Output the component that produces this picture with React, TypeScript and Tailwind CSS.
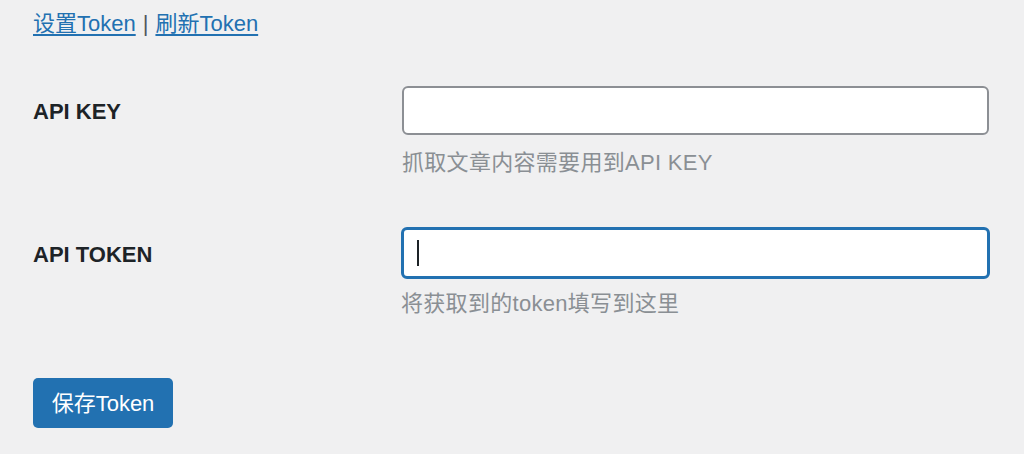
export default function App() {
  return (
    <div
      className="w-[1024px] h-[454px] bg-[#f0f0f1] text-[#1d2327] overflow-hidden"
      style={{ fontFamily: '"Liberation Sans", "Noto Sans CJK SC", sans-serif' }}
    >
      <div className="pl-[33px] pt-[9px]">
        {/* links */}
        <p className="text-[22px] leading-[30px] text-[#50575e]">
          <a href="#" className="text-[#2271b1] underline underline-offset-[3px]">设置Token</a>
          <span className="mx-[7px]">|</span>
          <a href="#" className="text-[#2271b1] underline underline-offset-[3px]">刷新Token</a>
        </p>

        {/* form */}
        <div className="mt-[47px] flex flex-col gap-[49px]">
          <div className="flex">
            <label className="w-[369px] pt-[13px] text-[22px] font-bold leading-[26px]">API KEY</label>
            <div className="flex flex-col">
              <input
                type="text"
                className="w-[587px] h-[49px] rounded-[6px] border-2 border-[#8c8f94] bg-white px-[14px] outline-none"
              />
              <p className="mt-[13px] text-[22px] leading-[30px] tracking-[0.3px] text-[#8a8f94]">抓取文章内容需要用到API KEY</p>
            </div>
          </div>

          <div className="flex">
            <label className="w-[368px] pt-[15px] text-[22px] font-bold leading-[26px]">API TOKEN</label>
            <div className="flex flex-col">
              <div className="w-[589px] h-[52px] rounded-[6px] border-[3px] border-[#2271b1] bg-white flex items-center pl-[13px]">
                <span className="w-[2px] h-[26px] bg-[#1d2327]" />
              </div>
              <p className="mt-[11px] text-[22px] leading-[28px] tracking-[0.3px] text-[#8a8f94]">将获取到的token填写到这里</p>
            </div>
          </div>
        </div>

        <button className="mt-[60px] w-[140px] h-[50px] rounded-[5px] bg-[#2271b1] text-white text-[22px]">
          保存Token
        </button>
      </div>
    </div>
  );
}
